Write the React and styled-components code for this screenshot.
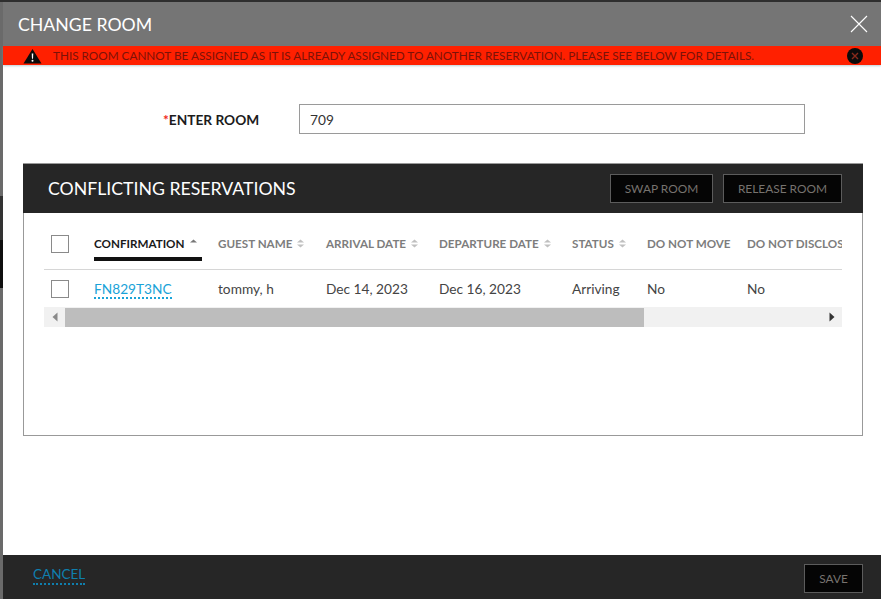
import React from "react";
import styled, { createGlobalStyle } from "styled-components";

const Global = createGlobalStyle`
  html, body { margin: 0; padding: 0; height: 100%; overflow: hidden; background: #6a6a6a; }
  #root { height: 100%; }
  * { box-sizing: border-box; }
`;

// what shows of the page behind the modal: a thin strip at the top and left
const Backdrop = styled.div`
  height: 599px;
  width: 881px;
  padding: 2px 0 0 3px;
  font-family: Lato, "Liberation Sans", sans-serif;
  background:
    linear-gradient(#2e2e2e, #2e2e2e) 0 0 / 100% 2px no-repeat,
    linear-gradient(
      #6a6a6a 196px,
      #333 196px,
      #333 240px,
      #0f0f0f 240px,
      #0f0f0f 288px,
      #6a6a6a 288px
    );
`;

const Modal = styled.div`
  height: 597px;
  display: flex;
  flex-direction: column;
  background: #fff;
`;

const Header = styled.div`
  height: 44px;
  flex: none;
  background: #757575;
  display: flex;
  align-items: center;
  justify-content: space-between;
  padding: 0 13px 0 15px;
`;

const Title = styled.h1`
  margin: 1px 0 0;
  font-size: 17.7px;
  font-weight: 400;
  color: #fff;
`;

const CloseButton = styled.button`
  width: 18px;
  height: 18px;
  padding: 0;
  border: 0;
  background: none;
  display: flex;
`;

const Alert = styled.div`
  height: 19px;
  flex: none;
  background: #ff2000;
  display: flex;
  align-items: center;
  padding: 0 18px 0 20px;
  box-shadow: 0 1px 2px rgba(120, 160, 170, 0.5);
`;

const AlertText = styled.span`
  flex: 1;
  margin-left: 11px;
  font-size: 11.76px;
  color: #7c1208;
  white-space: nowrap;
`;

const RoomRow = styled.div`
  display: flex;
  align-items: center;
  margin-top: 39px;
  padding-left: 160px;
`;

const RoomLabel = styled.label`
  width: 136px;
  font-size: 13.7px;
  font-weight: 700;
  color: #1c1c1c;
`;

const Required = styled.span`
  color: #f02a1a;
`;

const RoomInput = styled.input`
  width: 506px;
  height: 30px;
  padding: 0 10px;
  border: 1px solid #9a9a9a;
  font-family: inherit;
  font-size: 13.7px;
  color: #333;
  outline: 0;
`;

const Panel = styled.section`
  margin: 29px 18px 0 20px;
  height: 273px;
  border: 1px solid #999;
`;

const PanelHead = styled.div`
  height: 49px;
  background: #262626;
  margin: 0 -1px;
  display: flex;
  align-items: center;
  justify-content: space-between;
  padding: 0 21px 0 25px;
`;

const PanelTitle = styled.h2`
  margin: 0;
  font-size: 17.7px;
  font-weight: 400;
  color: #fff;
`;

const PanelActions = styled.div`
  display: flex;
  gap: 10px;
`;

const DarkButton = styled.button`
  height: 29px;
  width: ${(p) => p.$width}px;
  padding: 0;
  background: #050505;
  border: 1px solid #5c5c5c;
  color: #77736f;
  font-family: inherit;
  font-size: 11.9px;
`;

const TableWrap = styled.div`
  margin: 0 20px;
  overflow: hidden;
`;

const Table = styled.div`
  width: 800px;
`;

const Row = styled.div`
  display: grid;
  grid-template-columns: 50px 124px 108px 113px 133px 75px 100px 97px;
  align-items: center;
  height: ${(p) => p.$height}px;
`;

const HeadRow = styled(Row)`
  border-bottom: 1px solid #d6d6d6;
  padding-top: 5px;
`;

const HeadCell = styled.div`
  position: relative;
  height: 100%;
  display: flex;
  align-items: center;
  gap: 4px;
  font-size: 11.65px;
  font-weight: 700;
  color: ${(p) => (p.$active ? "#1a1a1a" : "#7d7d7d")};
  white-space: nowrap;
`;

const ActiveBar = styled.span`
  position: absolute;
  left: 0;
  bottom: 8px;
  width: 108px;
  height: 4px;
  background: #111;
`;

const BodyCell = styled.div`
  font-size: 13.7px;
  color: #444;
  white-space: nowrap;
`;

const ConfirmLink = styled.a`
  color: #1aa3d8;
  font-size: 13.7px;
  border-bottom: 2px dotted #1aa3d8;
`;

const Check = styled.span`
  display: block;
  width: 18px;
  height: 18px;
  margin-left: 7px;
  border: 1px solid #8a8a8a;
  background: #fff;
`;

const ScrollTrack = styled.div`
  height: 20px;
  background: #f1f1f1;
  display: flex;
  align-items: center;
`;

const ScrollArrow = styled.span`
  width: 21px;
  flex: none;
  display: flex;
  justify-content: center;
`;

const ScrollThumb = styled.div`
  width: 579px;
  height: 19px;
  background: #bdbdbd;
`;

const ScrollSpace = styled.div`
  flex: 1;
`;

const Spacer = styled.div`
  flex: 1;
`;

const Footer = styled.div`
  height: 44px;
  flex: none;
  background: #262626;
  display: flex;
  align-items: center;
  justify-content: space-between;
  padding: 2px 18px 0 30px;
`;

const CancelLink = styled.a`
  font-size: 13.5px;
  color: #0f7fae;
  border-bottom: 2px dotted #0f7fae;
  line-height: 15px;
  padding-bottom: 1px;
  margin-bottom: 4px;
`;

const Sort = ({ active }) => (
  <svg width="9" height="11" viewBox="0 0 9 11">
    <path d="M4.5 1.5 L8 4.5 H1 Z" fill={active ? "#777" : "#c0c0c0"} />
    {!active && <path d="M1 6.5 H8 L4.5 9.5 Z" fill="#c0c0c0" />}
  </svg>
);

const columns = [
  { label: "GUEST NAME", sort: true },
  { label: "ARRIVAL DATE", sort: true },
  { label: "DEPARTURE DATE", sort: true },
  { label: "STATUS", sort: true },
  { label: "DO NOT MOVE" },
  { label: "DO NOT DISCLOSE" },
];

const cells = ["tommy, h", "Dec 14, 2023", "Dec 16, 2023", "Arriving", "No", "No"];

export default function App() {
  return (
    <>
      <Global />
      <Backdrop>
        <Modal>
          <Header>
            <Title>CHANGE ROOM</Title>
            <CloseButton aria-label="Close">
              <svg width="18" height="18" viewBox="0 0 18 18">
                <path d="M1 1 L17 17 M17 1 L1 17" stroke="#fff" strokeWidth="1.1" />
              </svg>
            </CloseButton>
          </Header>
          <Alert>
            <svg width="19" height="16" viewBox="0 0 19 16">
              <path d="M9.5 1 L18.5 15.5 H0.5 Z" fill="#0b0b0b" />
              <path d="M8.7 5.5 H10.3 L10 10.8 H9 Z" fill="#fff" />
              <circle cx="9.5" cy="12.8" r="1" fill="#fff" />
            </svg>
            <AlertText>
              THIS ROOM CANNOT BE ASSIGNED AS IT IS ALREADY ASSIGNED TO ANOTHER RESERVATION. PLEASE SEE BELOW FOR DETAILS.
            </AlertText>
            <svg width="16" height="16" viewBox="0 0 16 16">
              <circle cx="8" cy="8" r="8" fill="#0b0b0b" />
              <path d="M5 5 L11 11 M11 5 L5 11" stroke="#8a2a1c" strokeWidth="1.4" />
            </svg>
          </Alert>
          <RoomRow>
            <RoomLabel>
              <Required>*</Required>ENTER ROOM
            </RoomLabel>
            <RoomInput defaultValue="709" />
          </RoomRow>
          <Panel>
            <PanelHead>
              <PanelTitle>CONFLICTING RESERVATIONS</PanelTitle>
              <PanelActions>
                <DarkButton $width={103}>SWAP ROOM</DarkButton>
                <DarkButton $width={119}>RELEASE ROOM</DarkButton>
              </PanelActions>
            </PanelHead>
            <TableWrap>
              <Table>
                <HeadRow $height={57}>
                  <Check />
                  <HeadCell $active>
                    CONFIRMATION <Sort active />
                    <ActiveBar />
                  </HeadCell>
                  {columns.map((c) => (
                    <HeadCell key={c.label}>
                      {c.label} {c.sort && <Sort />}
                    </HeadCell>
                  ))}
                </HeadRow>
                <Row $height={37}>
                  <Check />
                  <BodyCell>
                    <ConfirmLink>FN829T3NC</ConfirmLink>
                  </BodyCell>
                  {cells.map((c, i) => (
                    <BodyCell key={i}>{c}</BodyCell>
                  ))}
                </Row>
              </Table>
              <ScrollTrack>
                <ScrollArrow>
                  <svg width="6" height="10" viewBox="0 0 6 10">
                    <path d="M5.5 0.5 V9.5 L0.5 5 Z" fill="#8a8a8a" />
                  </svg>
                </ScrollArrow>
                <ScrollThumb />
                <ScrollSpace />
                <ScrollArrow>
                  <svg width="6" height="10" viewBox="0 0 6 10">
                    <path d="M0.5 0.5 V9.5 L5.5 5 Z" fill="#333" />
                  </svg>
                </ScrollArrow>
              </ScrollTrack>
            </TableWrap>
          </Panel>
          <Spacer />
          <Footer>
            <CancelLink>CANCEL</CancelLink>
            <DarkButton $width={59}>SAVE</DarkButton>
          </Footer>
        </Modal>
      </Backdrop>
    </>
  );
}
